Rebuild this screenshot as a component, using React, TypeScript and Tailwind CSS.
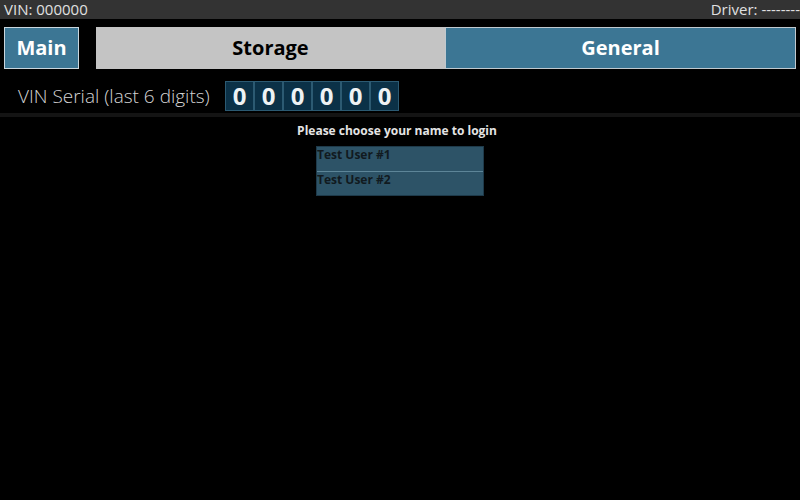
import React from "react";

const DIGITS = ["0", "0", "0", "0", "0", "0"];
const USERS = ["Test User #1", "Test User #2"];

export default function App() {
  return (
    <div
      className="w-[800px] h-[500px] bg-black text-white overflow-hidden"
      style={{ fontFamily: '"Open Sans", "Noto Sans", sans-serif' }}
    >
      {/* status bar */}
      <div className="h-[19px] bg-[#333333] flex items-center justify-between pl-[4px] text-[15px] leading-none text-[#e0e0e0]">
        <span>VIN: 000000</span>
        <span>Driver: --------</span>
      </div>

      {/* tabs */}
      <div className="flex mt-[8px] px-[4px] h-[42px]">
        <button className="w-[75px] h-full bg-[#3c7694] border border-[#c9d6de] text-white font-bold text-[20px]">
          Main
        </button>
        <div className="flex flex-1 ml-[17px]">
          <button className="flex-1 h-full bg-[#c4c4c4] text-black font-bold text-[20px]">
            Storage
          </button>
          <button className="flex-1 h-full bg-[#3c7694] border border-[#c0c9cf] text-white font-bold text-[20px]">
            General
          </button>
        </div>
      </div>

      {/* vin serial */}
      <div className="flex items-center h-[30px] mt-[12px] pl-[18px]">
        <span className="text-[19px] font-light text-[#d4d4d4] w-[207px] whitespace-nowrap">
          VIN Serial (last 6 digits)
        </span>
        <div className="flex">
          {DIGITS.map((d, i) => (
            <div
              key={i}
              className="w-[29px] h-[30px] bg-[#0b3147] border border-[#2c5a72] flex items-center justify-center text-[24px] font-bold text-[#eef2f4]"
            >
              {d}
            </div>
          ))}
        </div>
      </div>

      <div className="h-[4px] mt-[2px] bg-[#141414]" />

      {/* login */}
      <div className="flex flex-col items-center mt-[5px] pr-[6px]">
        <div className="text-[12px] font-bold text-[#e4e4e4] leading-[18px]">
          Please choose your name to login
        </div>
        <div className="w-[168px] mt-[6px] ml-[6px] border border-[#1e3a4a] bg-[#2d5367]">
          {USERS.map((u, i) => (
            <div
              key={u}
              className={`h-[24px] text-[12px] font-bold text-[#111a20] leading-[16px] ${
                i > 0 ? "border-t border-[#5d8598]" : ""
              }`}
            >
              {u}
            </div>
          ))}
        </div>
      </div>
    </div>
  );
}
